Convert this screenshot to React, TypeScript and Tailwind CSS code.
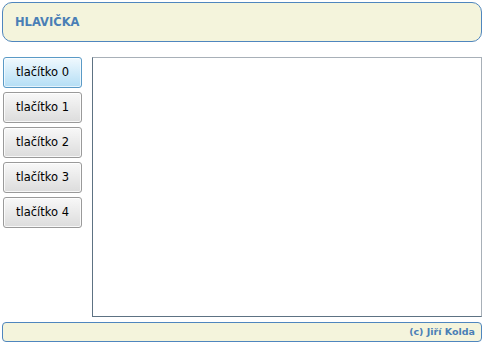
import React, { useState } from 'react';

const buttons = ['tlačítko 0', 'tlačítko 1', 'tlačítko 2', 'tlačítko 3', 'tlačítko 4'];

export default function App() {
  const [active, setActive] = useState(0);

  return (
    <div
      className="w-[484px] h-[344px] bg-white flex flex-col px-[2px] pt-[2px] pb-[2px]"
      style={{ fontFamily: '"DejaVu Sans", Verdana, sans-serif' }}
    >
      {/* Header */}
      <div className="h-[40px] shrink-0 rounded-[10px] border border-[#4f86be] bg-[#f4f4dc] flex items-center pl-[12px] pt-[2px]">
        <span className="text-[11.5px] font-bold text-[#4a7fb6]">HLAVIČKA</span>
      </div>

      {/* Body */}
      <div className="flex mt-[15px] h-[260px] shrink-0">
        <div className="w-[79px] ml-[1px] flex flex-col gap-[4px]">
          {buttons.map((label, i) => (
            <button
              key={label}
              onClick={() => setActive(i)}
              className={
                i === active
                  ? 'h-[31px] rounded-[3px] border border-[#5a9ac6] bg-gradient-to-b from-[#f0f9fe] to-[#b4def5] text-[11.5px] text-black shadow-[inset_0_0_0_1px_#ffffffaa]'
                  : 'h-[31px] rounded-[3px] border border-[#9a9a9a] bg-gradient-to-b from-[#f8f8f8] to-[#dcdcdc] text-[11.5px] text-black shadow-[inset_0_0_0_1px_#ffffffcc]'
              }
            >
              {label}
            </button>
          ))}
        </div>
        <div className="ml-[10px] flex-1 border border-t-[#a8b0b8] border-r-[#a8b0b8] border-l-[#5d7283] border-b-[#5d7283] bg-white" />
      </div>

      {/* Footer */}
      <div className="mt-[5px] h-[20px] shrink-0 rounded-[4px] border border-[#4f86be] bg-[#f4f4dc] flex items-center justify-end pr-[6px]">
        <span className="text-[9.5px] font-bold text-[#4a7fb6]">(c) Jiří Kolda</span>
      </div>
    </div>
  );
}
